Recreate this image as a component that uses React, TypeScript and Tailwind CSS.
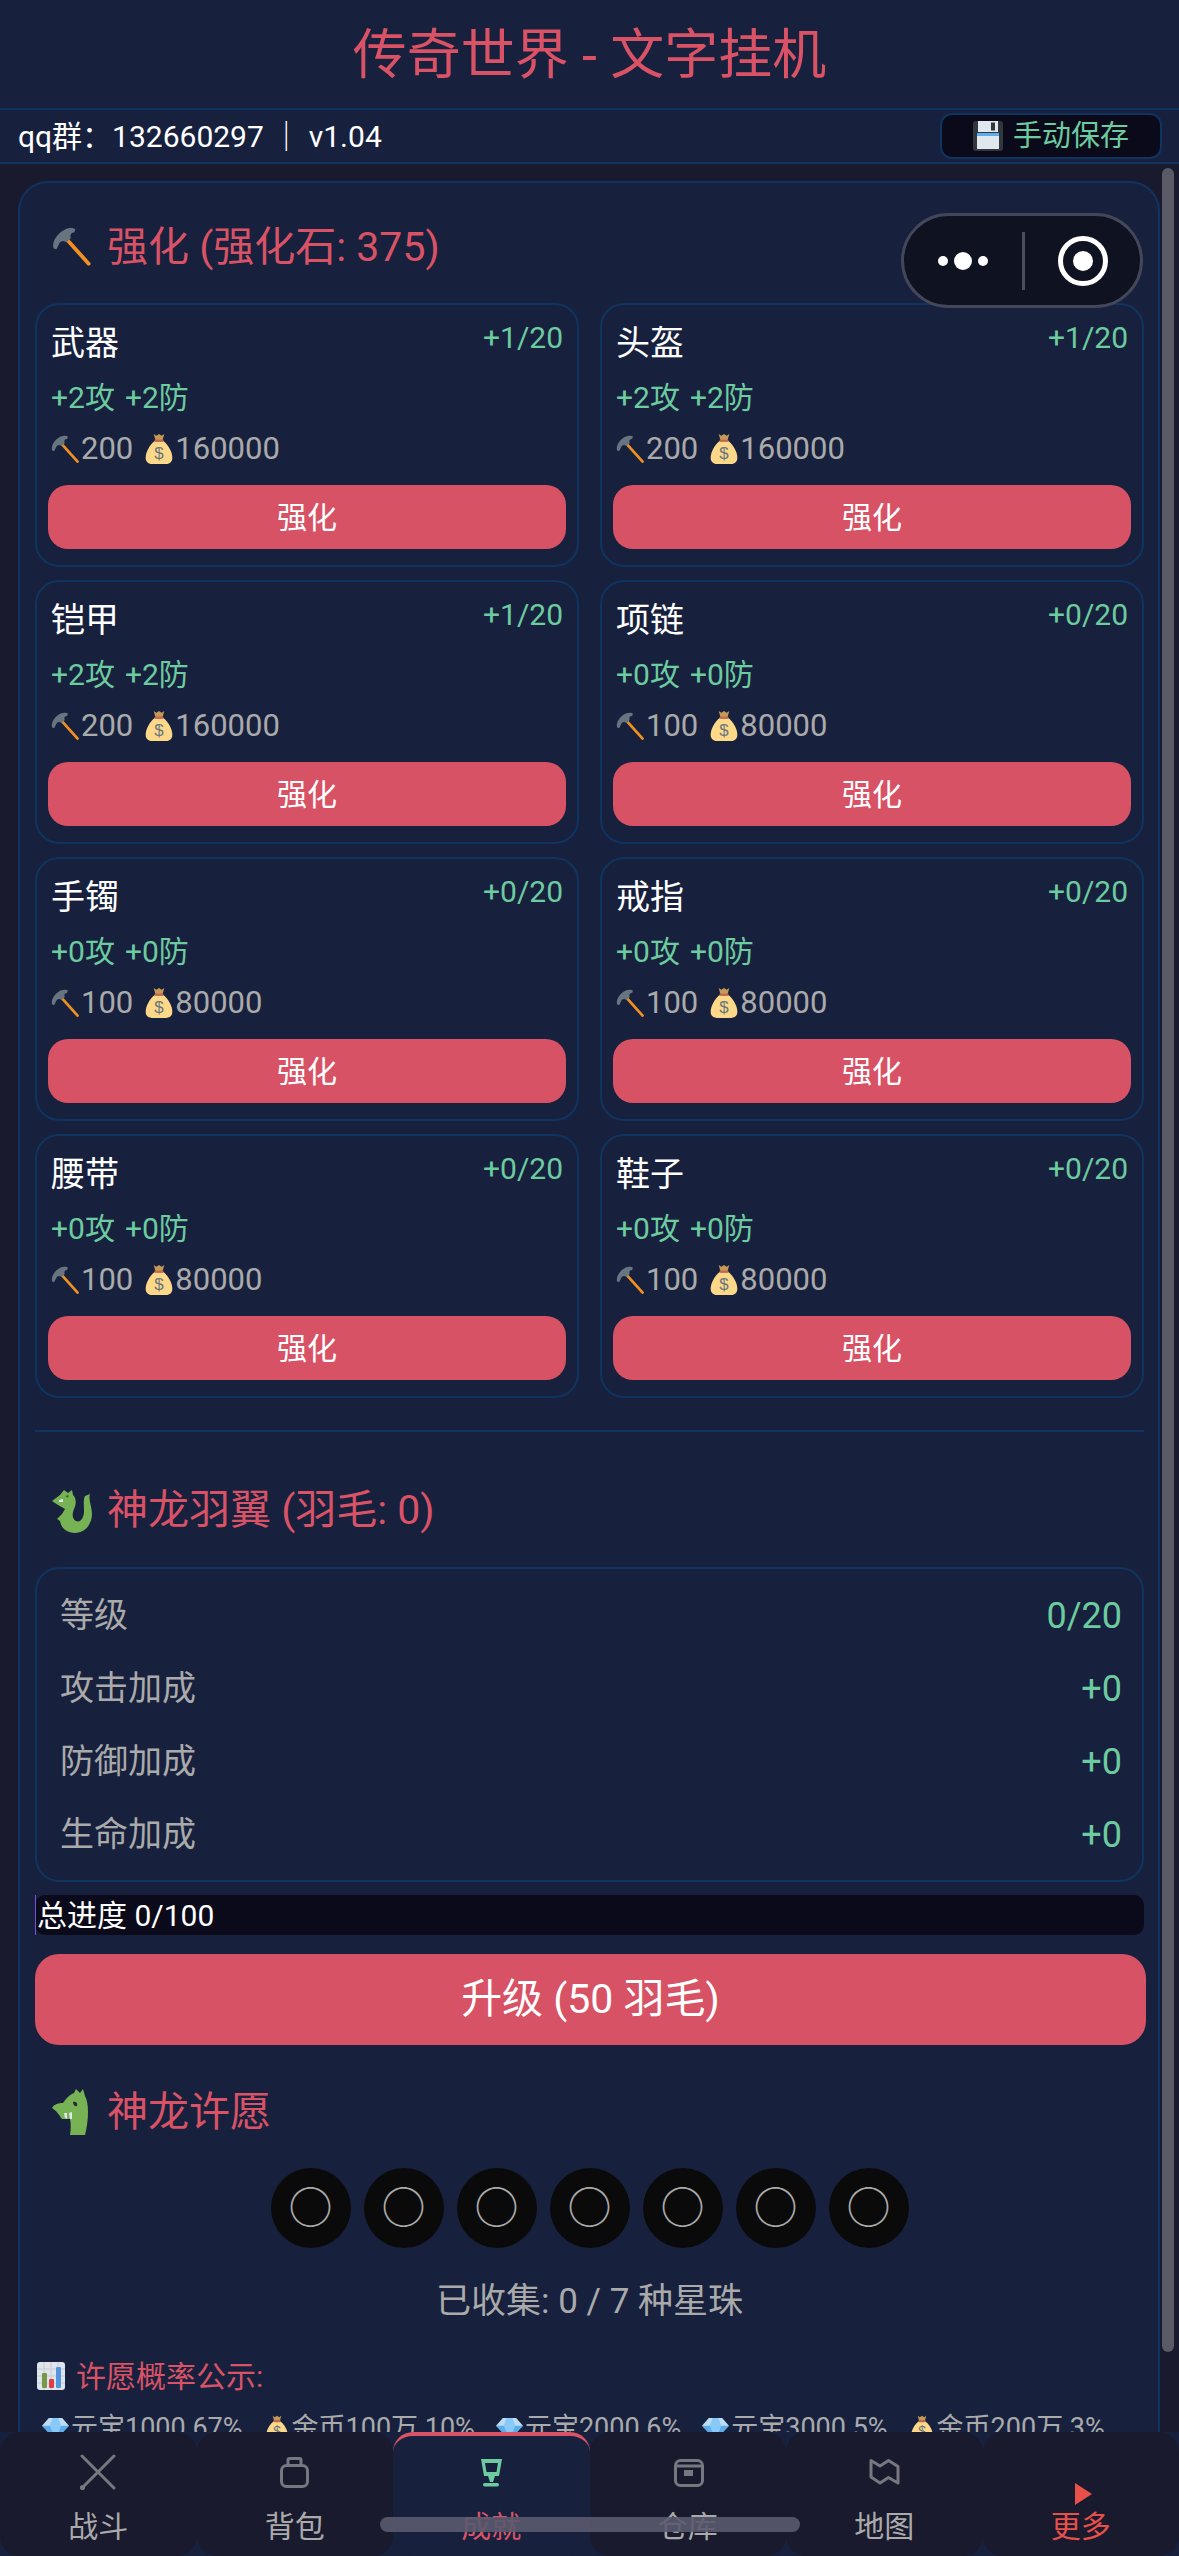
import { FC } from 'react';

// ~ ~ ~ ~ ~ ~ ~ ~ ~ ~ ~ ~ ~ ~ ~ ~ ~ ~ ~ ~ ~ ~ Emoji drawings

const Hammer: FC<{ className?: string }> = ({ className }) => (
  <svg viewBox="0 0 36 36" className={className}>
    <path d="M14 12 L33 33" stroke="#f19020" strokeWidth="3.4" strokeLinecap="round" />
    <path d="M1 17 C1 11 6 5 12 2 C16 0 20 1 21 2 L20 5 C17 5 16 7 17 10 L13 14 C11 12 9 12 7 14 L4 20 C2 20 1 19 1 17 Z" fill="#66757f" />
  </svg>
);

const MoneyBag: FC<{ className?: string }> = ({ className }) => (
  <svg viewBox="0 0 36 36" className={className}>
    <path d="M13 9 C8 13 3 21 3 28 C3 33 7 35 12 35 L24 35 C29 35 33 33 33 28 C33 21 28 13 23 9 Z" fill="#fdd888" />
    <path d="M12 1 L15 3 L18 1 L21 3 L24 1 L22 8 L14 8 Z" fill="#c49a56" />
    <rect x="13" y="7.5" width="10" height="2.5" fill="#bf6952" />
    <text x="18" y="29" textAnchor="middle" fontSize="19" fill="#67757f" fontFamily="Liberation Sans">$</text>
  </svg>
);

const Floppy: FC<{ className?: string }> = ({ className }) => (
  <svg viewBox="0 0 30 30" className={className}>
    <rect width="30" height="30" rx="3" fill="#31373d" />
    <rect x="5" y="0" width="20" height="11" fill="#e1e8ed" />
    <rect x="18" y="1.5" width="4" height="8" fill="#31373d" />
    <rect x="4" y="12" width="22" height="3" fill="#5dadec" />
    <rect x="4" y="15" width="22" height="13" fill="#e1e8ed" />
  </svg>
);

const Dragon: FC<{ className?: string }> = ({ className }) => (
  <svg viewBox="0 0 40 46" className={className}>
    <path d="M12 3 L16 6 L20 3 L21 8 C25 12 24 18 22 22 C20 27 20 32 24 34 C29 36 32 30 32 24 C32 18 31 13 33 9 L38 7 C36 12 40 20 40 27 C40 37 33 46 23 46 C15 46 9 41 8 34 L5 32 L10 27 L13 22 L6 18 L0 14 L8 8 Z" fill="#77b255" />
    <path d="M7 13 L11 12 L11 15 L7 15 Z" fill="#e1e8ed" />
    <path d="M13 9 L17 8 L16 11 Z" fill="#3e721d" />
  </svg>
);

const DragonFace: FC<{ className?: string }> = ({ className }) => (
  <svg viewBox="0 0 40 46" className={className}>
    <path d="M24 0 L28 4 L31 0 L33 7 C37 14 37 30 33 46 L18 46 C19 40 19 35 18 30 L10 30 C7 26 5 22 0 19 C2 15 7 14 11 14 C15 8 19 5 22 4 Z" fill="#77b255" />
    <path d="M21 13 C24 12 26 14 25 17 C23 18 21 16 21 13 Z" fill="#292f33" />
    <path d="M12 24 L15 24 L15 30 L13 29 Z M17 24 L20 23 L20 30 L18 30 Z" fill="#e1e8ed" />
  </svg>
);

const Chart: FC<{ className?: string }> = ({ className }) => (
  <svg viewBox="0 0 28 28" className={className}>
    <rect width="28" height="28" rx="3" fill="#dfe5ea" />
    <path d="M0 7 H28 M0 14 H28 M0 21 H28 M7 0 V28 M14 0 V28 M21 0 V28" stroke="#c6ced5" strokeWidth="1" />
    <rect x="5" y="11" width="5" height="15" rx="1" fill="#77984a" />
    <rect x="12" y="17" width="5" height="9" rx="1" fill="#dd3e46" />
    <rect x="19" y="5" width="5" height="21" rx="1" fill="#5398dc" />
  </svg>
);

const Gem: FC<{ className?: string }> = ({ className }) => (
  <svg viewBox="0 0 28 24" className={className}>
    <path d="M7 1 H21 L28 9 L14 24 L0 9 Z" fill="#bdddf4" />
    <path d="M0 9 H28 L14 24 Z" fill="#5dadec" />
    <path d="M8 9 H20 L14 24 Z" fill="#88c9f9" />
    <path d="M8 9 L11 1 H17 L20 9 Z" fill="#88c9f9" />
  </svg>
);

// ~ ~ ~ ~ ~ ~ ~ ~ ~ ~ ~ ~ ~ ~ ~ ~ ~ ~ ~ ~ ~ ~ Nav icons

const IconSwords = (
  <svg viewBox="0 0 36 36" className="w-[36px] h-[36px]" fill="none" stroke="#77777f" strokeWidth="3" strokeLinecap="round">
    <path d="M2 2 L34 34 M34 2 L2.5 33.5" />
    <circle cx="2.5" cy="33.5" r="2.6" fill="#77777f" stroke="none" />
  </svg>
);

const IconBag = (
  <svg viewBox="0 0 36 36" className="w-[36px] h-[36px]" fill="none" stroke="#77777f" strokeWidth="3">
    <rect x="4.5" y="11.5" width="26" height="21" rx="5" />
    <path d="M11 11 V6 Q11 4.5 12.5 4.5 H22.5 Q24 4.5 24 6 V11" />
  </svg>
);

const IconTrophy = (
  <svg viewBox="0 0 36 36" className="w-[36px] h-[36px]">
    <path fillRule="evenodd" d="M8 5 H29 L26 22 H22 L20 28 H17 L15 22 H11 Z M12 9 L13.5 18 H23.5 L25 9 Z" fill="#6ccb9f" />
    <rect x="10" y="29" width="16" height="3.5" rx="1.7" fill="#6ccb9f" />
  </svg>
);

const IconBox = (
  <svg viewBox="0 0 36 36" className="w-[36px] h-[36px]" fill="none" stroke="#77777f" strokeWidth="3">
    <rect x="5.5" y="6.5" width="27" height="25" rx="5" />
    <path d="M6 12 H32" />
    <rect x="14" y="16" width="9" height="6" fill="#77777f" stroke="none" />
  </svg>
);

const IconMap = (
  <svg viewBox="0 0 36 36" className="w-[36px] h-[36px]" fill="none" stroke="#77777f" strokeWidth="3" strokeLinejoin="round">
    <path d="M5 6.5 L14 12 L22.5 6.5 L32 12.5 V29 L22.5 23.5 L14 29 L5 23 Z" />
  </svg>
);

const IconMore = (
  <svg viewBox="0 0 36 36" className="w-[36px] h-[36px] overflow-visible">
    <path d="M12 29 L29 40 L12 51 Z" fill="#e8504a" />
  </svg>
);

// ~ ~ ~ ~ ~ ~ ~ ~ ~ ~ ~ ~ ~ ~ ~ ~ ~ ~ ~ ~ ~ ~ Data

const GEARS = [
  { name: '武器', level: '+1/20', atk: '+2攻', def: '+2防', stone: 200, gold: 160000 },
  { name: '头盔', level: '+1/20', atk: '+2攻', def: '+2防', stone: 200, gold: 160000 },
  { name: '铠甲', level: '+1/20', atk: '+2攻', def: '+2防', stone: 200, gold: 160000 },
  { name: '项链', level: '+0/20', atk: '+0攻', def: '+0防', stone: 100, gold: 80000 },
  { name: '手镯', level: '+0/20', atk: '+0攻', def: '+0防', stone: 100, gold: 80000 },
  { name: '戒指', level: '+0/20', atk: '+0攻', def: '+0防', stone: 100, gold: 80000 },
  { name: '腰带', level: '+0/20', atk: '+0攻', def: '+0防', stone: 100, gold: 80000 },
  { name: '鞋子', level: '+0/20', atk: '+0攻', def: '+0防', stone: 100, gold: 80000 },
];

const WING_STATS = [
  { label: '等级', value: '0/20' },
  { label: '攻击加成', value: '+0' },
  { label: '防御加成', value: '+0' },
  { label: '生命加成', value: '+0' },
];

const ODDS = [
  { gem: true, text: '元宝1000 67%' },
  { gem: false, text: '金币100万 10%' },
  { gem: true, text: '元宝2000 6%' },
  { gem: true, text: '元宝3000 5%' },
  { gem: false, text: '金币200万 3%' },
];

const TABS = [
  { label: '战斗', icon: IconSwords },
  { label: '背包', icon: IconBag },
  { label: '成就', icon: IconTrophy, active: true },
  { label: '仓库', icon: IconBox },
  { label: '地图', icon: IconMap },
  { label: '更多', icon: IconMore, more: true },
];

// ~ ~ ~ ~ ~ ~ ~ ~ ~ ~ ~ ~ ~ ~ ~ ~ ~ ~ ~ ~ ~ ~ Parts

const SectionTitle: FC<{ icon: React.ReactNode; text: string; className?: string }> = ({ icon, text, className }) => (
  <h2 className={`flex items-center h-[60px] pl-[17px] gap-[15px] text-[41px] leading-none font-normal text-[#d95265] ${className ?? ''}`}>
    {icon}
    <span>{text}</span>
  </h2>
);

const GearCard: FC<(typeof GEARS)[number]> = ({ name, level, atk, def, stone, gold }) => (
  <div className="h-[264px] rounded-[24px] border-2 border-[#0f3460] p-[11px]">
    <div className="flex justify-between h-[52px] px-[3px]">
      <span className="text-[34px] leading-[54px] text-white">{name}</span>
      <span className="text-[30px] leading-[44px] text-[#6ccb9f]">{level}</span>
    </div>
    <div className="flex gap-[10px] mt-[8px] h-[44px] px-[3px] text-[30px] leading-[44px] text-[#6ccb9f]">
      <span>{atk}</span>
      <span>{def}</span>
    </div>
    <div className="flex items-center mt-[6px] h-[46px] px-[3px] text-[31px] text-[#aaaaaa]">
      <Hammer className="w-[29px] h-[29px]" />
      <span className="ml-[1px]">{stone}</span>
      <MoneyBag className="w-[32px] h-[32px] ml-[10px]" />
      <span>{gold}</span>
    </div>
    <button className="block w-full h-[64px] mt-[13px] rounded-[20px] bg-[#d85265] text-[30px] text-white">强化</button>
  </div>
);

// ~ ~ ~ ~ ~ ~ ~ ~ ~ ~ ~ ~ ~ ~ ~ ~ ~ ~ ~ ~ ~ ~ Page

export const App: FC = () => {
  return (
    <div className="relative flex flex-col w-[1179px] h-[2556px] overflow-hidden bg-[#1a1a2e] font-['Roboto','Noto_Sans_CJK_SC',sans-serif]">

      <header className="flex items-center justify-center h-[110px] pt-[4px] shrink-0 bg-[#17213e] border-b-2 border-[#0f3460]">
        <h1 className="text-[54px] font-normal leading-none text-[#d95265]">传奇世界 - 文字挂机</h1>
      </header>

      <div className="flex items-center justify-between h-[54px] shrink-0 pl-[18px] pr-[17px] bg-[#17213e] border-b-2 border-[#0f3460]">
        <span className="text-[30px] text-white whitespace-pre">qq群：132660297 ｜ v1.04</span>
        <button className="flex items-center justify-center gap-[10px] w-[222px] h-[46px] pt-[2px] rounded-[12px] border-2 border-[#0f3460] bg-[#0a0a1a] text-[29px] text-[#6ccb9f]">
          <Floppy className="w-[30px] h-[30px] -mt-[2px]" />
          手动保存
        </button>
      </div>

      <main className="flex-1 min-h-0 overflow-hidden pl-[18px] pt-[17px]">
        <section className="w-[1142px] h-[2400px] rounded-[30px] border-2 border-[#0f3460] bg-[#17213e] pl-[15px] pr-[14px] pt-[34px]">
          <SectionTitle icon={<Hammer className="w-[40px] h-[40px]" />} text="强化 (强化石: 375)" className="mb-[26px]" />

          <div className="grid grid-cols-2 gap-x-[21px] gap-y-[13px]">
            {GEARS.map(gear => (
              <GearCard key={gear.name} {...gear} />
            ))}
          </div>

          <div className="h-[2px] mt-[32px] bg-[#0f3460]" />

          <SectionTitle icon={<Dragon className="w-[40px] h-[46px]" />} text="神龙羽翼 (羽毛: 0)" className="mt-[48px] mb-[27px]" />

          <div className="h-[315px] rounded-[24px] border-2 border-[#0f3460] pt-[10px] pl-[23px] pr-[20px]">
            {WING_STATS.map(stat => (
              <div key={stat.label} className="flex justify-between items-center h-[73px] text-[34px]">
                <span className="text-[#aaaaaa]">{stat.label}</span>
                <span className="text-[36px] text-[#6ccb9f]">{stat.value}</span>
              </div>
            ))}
          </div>

          <div className="relative h-[40px] mt-[13px] rounded-[10px] bg-[#0a0a1a] text-[30px] leading-[42px] text-white pl-[2px]">
            <div className="absolute left-0 top-0 w-[1px] h-full bg-[#7b4ddb]" />
            总进度 0/100
          </div>

          <button className="block w-[1111px] h-[91px] mt-[19px] rounded-[24px] bg-[#d85265] text-[41px] text-white">升级 (50 羽毛)</button>

          <SectionTitle icon={<DragonFace className="w-[40px] h-[46px]" />} text="神龙许愿" className="mt-[37px] mb-[26px]" />

          <div className="flex justify-center gap-[13px]">
            {[0, 1, 2, 3, 4, 5, 6].map(i => (
              <div key={i} className="flex items-center justify-center w-[80px] h-[80px] pt-[2px] rounded-full bg-[#0a0a0a] text-[44px] leading-none text-[#aaaaaa]">○</div>
            ))}
          </div>

          <p className="h-[50px] mt-[28px] text-center text-[35px] leading-[52px] text-[#aaaaaa]">已收集: 0 / 7 种星珠</p>

          <div className="flex items-center gap-[11px] h-[40px] mt-[30px] pl-[2px] text-[30px] text-[#d95265]">
            <Chart className="w-[28px] h-[28px]" />
            <span>许愿概率公示:</span>
          </div>

          <div className="flex gap-[21px] h-[40px] mt-[12px] pl-[7px] text-[27px] leading-[40px] text-[#aaaaaa] whitespace-nowrap">
            {ODDS.map(odd => (
              <span key={odd.text} className="flex items-center gap-[2px]">
                {odd.gem ? <Gem className="w-[27px] h-[23px]" /> : <MoneyBag className="w-[26px] h-[30px]" />}
                {odd.text}
              </span>
            ))}
          </div>
        </section>
      </main>

      <nav className="grid grid-cols-6 h-[124px] shrink-0 bg-[#17213e]">
        {TABS.map(tab => (
          <div
            key={tab.label}
            className={`flex flex-col items-center pt-[22px] rounded-[20px] ${tab.active ? 'bg-[#17213e] border-t-4 border-[#d95265]' : 'bg-[#1a1a2e]'}`}
          >
            <div className={tab.active ? '-mt-[4px]' : ''}>{tab.icon}</div>
            <span className={`mt-[17px] text-[30px] leading-[40px] ${tab.active ? 'text-[#d95265]' : tab.more ? 'text-[#e8504a]' : 'text-[#aaaaaa]'}`}>
              {tab.label}
            </span>
          </div>
        ))}
      </nav>

      {/* scrollbar */}
      <div className="absolute left-[1162px] top-[168px] w-[12px] h-[2184px] rounded-full bg-[#5a5a66]" />

      {/* home indicator */}
      <div className="absolute left-[380px] top-[2517px] w-[420px] h-[15px] rounded-full bg-[#5a5a6e]/90" />

      {/* wechat capsule */}
      <div className="absolute left-[901px] top-[213px] flex items-center w-[242px] h-[95px] rounded-full border-[3px] border-[#44465a] bg-[#0f1220]">
        <div className="flex items-center justify-center gap-[6px] w-[118px] h-full">
          <div className="w-[10px] h-[10px] rounded-full bg-white" />
          <div className="w-[18px] h-[18px] rounded-full bg-white" />
          <div className="w-[10px] h-[10px] rounded-full bg-white" />
        </div>
        <div className="w-[3px] h-[58px] bg-[#4a4d5a]" />
        <div className="flex items-center justify-center flex-1 h-full">
          <div className="flex items-center justify-center w-[50px] h-[50px] rounded-full border-[5px] border-white">
            <div className="w-[20px] h-[20px] rounded-full bg-white" />
          </div>
        </div>
      </div>
    </div>
  );
};

// ~ ~ ~ ~ ~ ~ ~ ~ ~ ~ ~ ~ ~ ~ ~ ~ ~ ~ ~ ~ ~ ~ Export

export default App;
